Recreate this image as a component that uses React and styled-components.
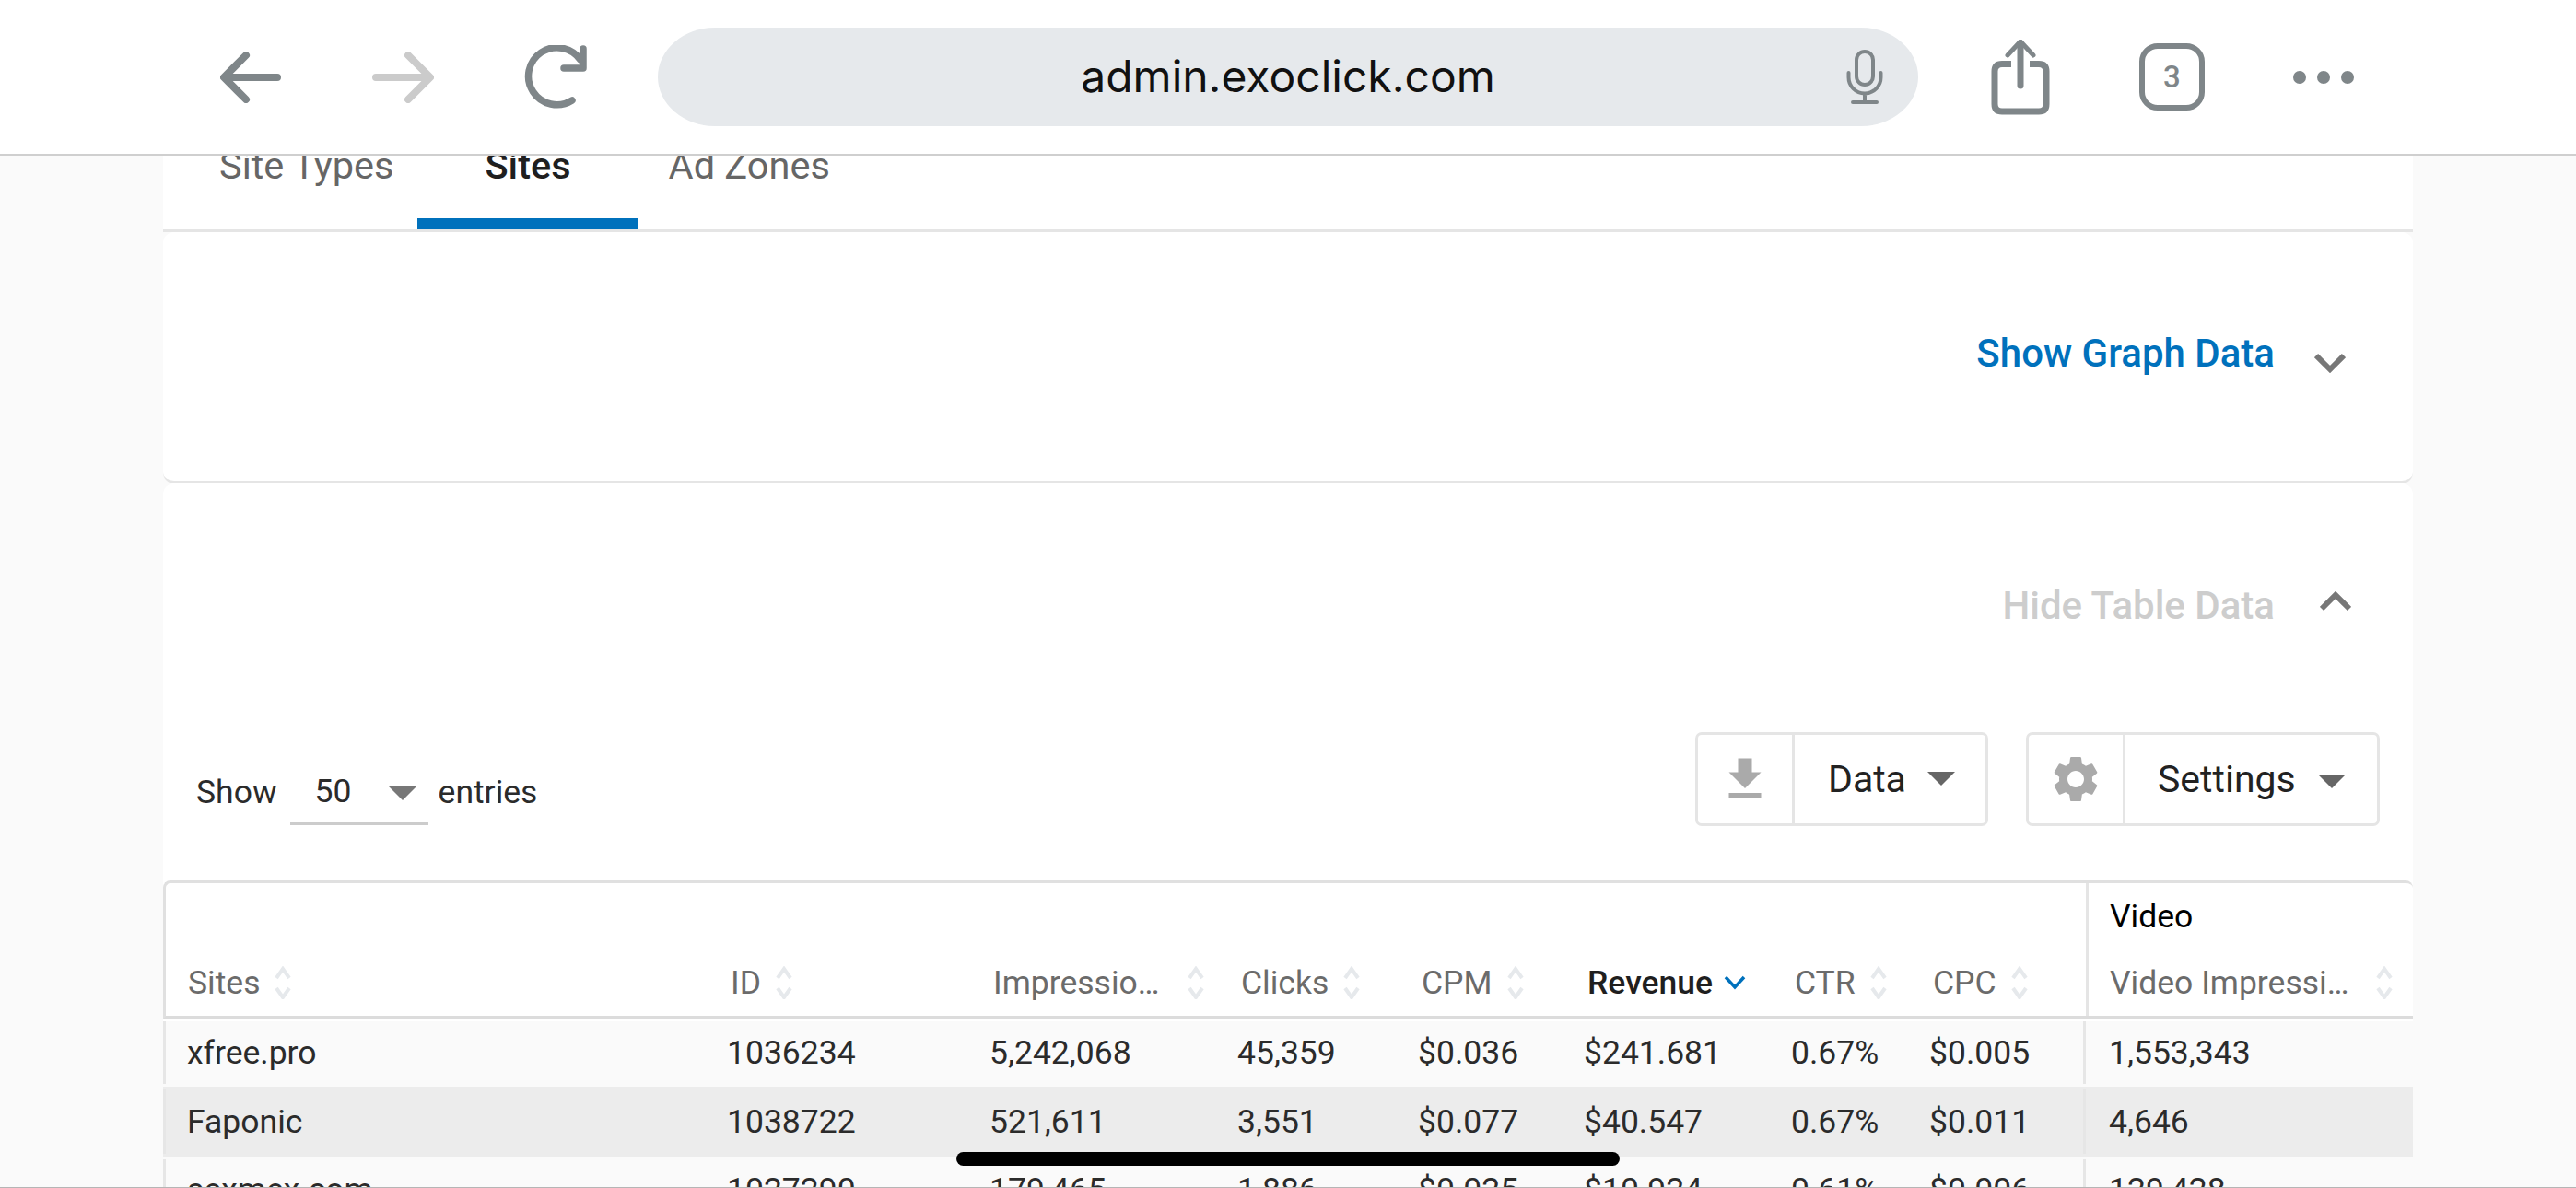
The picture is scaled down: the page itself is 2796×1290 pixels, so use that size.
import React from 'react'
import styled, { createGlobalStyle } from 'styled-components'
import { MdSettings, MdFileDownload } from 'react-icons/md'

const GlobalStyle = createGlobalStyle`
  html, body { margin: 0; padding: 0; height: 100%; overflow: hidden; background: #fafafa; }
  * { box-sizing: border-box; }
  body { font-family: Roboto, "Liberation Sans", sans-serif; color: #2b2b2b; }
`

const Screen = styled.div`
  position: relative;
  width: 2796px;
  height: 1290px;
  display: flex;
  flex-direction: column;
  overflow: hidden;
`

/* browser chrome */
const Toolbar = styled.header`
  flex: none;
  height: 169px;
  padding-left: 239px;
  display: flex;
  align-items: center;
  background: #fff;
  border-bottom: 2px solid #cfcfcf;
  color: #7f8689;
`
const NavIcon = styled.svg`
  flex: none;
  margin-left: ${p => p.$gap || 0}px;
  fill: none;
  stroke: ${p => p.$dim ? '#cbcbcb' : '#7f8689'};
  stroke-linecap: round;
  stroke-linejoin: round;
`
const AddressBar = styled.div`
  flex: none;
  width: 1368px;
  height: 107px;
  margin-left: 77px;
  display: grid;
  grid-template-columns: 1fr auto 1fr;
  align-items: center;
  background: #e6e9ec;
  border-radius: 62px / 53.5px;
`
const Url = styled.span`
  grid-column: 2;
  margin-top: -2px;
  font-family: Inter, Roboto, sans-serif;
  font-size: 48px;
  color: #111;
`
const Mic = styled.svg`
  grid-column: 3;
  justify-self: end;
  margin-right: 38px;
  fill: none;
  stroke: #7f8689;
  stroke-linecap: round;
`
const TabCount = styled.div`
  flex: none;
  width: 71px;
  height: 73px;
  margin-left: 97px;
  display: flex;
  align-items: center;
  justify-content: center;
  border: 6px solid #7f8689;
  border-radius: 20px;
  font-size: 33px;
  font-weight: 500;
  color: #7f8689;
`
const Dots = styled.div`
  flex: none;
  margin-left: 96px;
  display: flex;
  gap: 12px;
`
const Dot = styled.span`
  width: 14px;
  height: 14px;
  border-radius: 50%;
  background: #7f8689;
`

/* page */
const Page = styled.main`
  flex: 1;
  min-height: 0;
  padding: 0 177px;
  overflow: hidden;
  border-bottom: 1px solid #b5b5b5;
`
const TabBar = styled.nav`
  height: 83px;
  padding-left: 61px;
  display: flex;
  background: #fff;
  border-bottom: 3px solid #e5e5e5;
`
const Tab = styled.div`
  height: 91px;
  margin-top: -11px;
  padding-top: 1px;
  padding-left: ${p => p.$left}px;
  padding-right: ${p => p.$right}px;
  font-size: 41.5px;
  line-height: 42px;
  font-weight: ${p => p.$active ? 500 : 400};
  color: ${p => p.$active ? '#1f1f1f' : '#666'};
  border-bottom: ${p => p.$active ? '12px solid #0071bc' : '0'};
`
const Card = styled.section`
  background: #fff;
  border-radius: 12px;
  border-bottom: ${p => p.$last ? '0' : '3px solid #e5e5e5'};
`
const Toggle = styled.div`
  height: ${p => p.$height}px;
  padding-right: ${p => p.$right}px;
  display: flex;
  align-items: center;
  justify-content: flex-end;
`
const ToggleText = styled.span`
  margin-bottom: ${p => p.$shift}px;
  font-size: 42px;
  font-weight: 500;
  color: ${p => p.$muted ? '#cdcdcd' : '#0071bc'};
`
const Chevron = styled.svg`
  margin-left: ${p => p.$gap}px;
  margin-top: ${p => p.$shift}px;
  fill: none;
  stroke: #777;
  stroke-width: 6;
`
const Controls = styled.div`
  height: 102px;
  margin-top: 5px;
  padding: 0 36px 0 36px;
  display: flex;
  align-items: center;
`
const Length = styled.div`
  flex: 1;
  margin-top: 28px;
  display: flex;
  align-items: center;
  font-size: 35.5px;
  color: #2b2b2b;
`
const Select = styled.div`
  width: 150px;
  height: 72px;
  margin: 0 11px 0 14px;
  padding-left: 27px;
  padding-right: 13px;
  display: flex;
  align-items: center;
  justify-content: space-between;
  border-bottom: 3px solid #ccc;
`
const Caret = styled.span`
  width: 0;
  height: 0;
  border-left: ${p => p.$size}px solid transparent;
  border-right: ${p => p.$size}px solid transparent;
  border-top: ${p => p.$size}px solid ${p => p.$color || '#666'};
  margin-top: ${p => p.$shift || 0}px;
`
const ButtonGroup = styled.div`
  height: 102px;
  width: ${p => p.$width}px;
  margin-left: ${p => p.$gap || 0}px;
  display: flex;
  border: 3px solid #e5e5e5;
  border-radius: 7px;
`
const IconCell = styled.div`
  width: ${p => p.$width}px;
  display: flex;
  align-items: center;
  justify-content: center;
  border-right: 3px solid #e5e5e5;
  color: #aaa;
`
const ButtonLabel = styled.div`
  flex: 1;
  padding: 0 ${p => p.$right}px 0 ${p => p.$left}px;
  display: flex;
  align-items: center;
  justify-content: space-between;
  font-size: 41px;
  color: #222;
`

/* table */
const columns = '612px 285px 269px 196px 180px 225px 150px 167px 357px'
const rowHeights = [71, 76, 72]

const Table = styled.div`
  margin-top: 59px;
`
const Head = styled.div`
  display: grid;
  grid-template-columns: ${columns};
  grid-auto-rows: 72px;
  border-top: 3px solid #e0e0e0;
  border-left: 3px solid #e0e0e0;
  border-bottom: 3px solid #dcdcdc;
  border-top-right-radius: 8px;
  border-top-left-radius: 8px;
  margin-bottom: 3px;
`
const GroupSpacer = styled.div`
  grid-column: 1 / span 8;
`
const GroupCell = styled.div`
  padding-left: 23px;
  display: flex;
  align-items: center;
  border-left: 3px solid #e5e5e5;
  font-size: 35.5px;
  color: #000;
`
const HeadCell = styled.div`
  min-width: 0;
  padding-left: ${p => p.$first ? 24 : p.$split ? 23 : 1}px;
  padding-right: ${p => p.$right || 0}px;
  display: flex;
  align-items: center;
  border-left: ${p => p.$split ? '3px solid #e5e5e5' : '0'};
  font-size: 35.5px;
  font-weight: ${p => p.$sorted ? 500 : 400};
  color: ${p => p.$sorted ? '#1f1f1f' : '#6b6b6b'};
`
const Label = styled.span`
  min-width: 0;
  overflow: hidden;
  white-space: nowrap;
  text-overflow: ellipsis;
`
const SortIcon = styled.svg`
  flex: none;
  margin-left: ${p => p.$gap}px;
  fill: none;
  stroke: ${p => p.$active ? '#0071bc' : '#e6e9ec'};
  stroke-width: ${p => p.$active ? 3.5 : 4};
`
const Row = styled.div`
  display: grid;
  grid-template-columns: ${columns};
  height: ${p => p.$height}px;
  padding: ${p => p.$top}px 0 3px;
  background: ${p => p.$striped ? '#ececec' : '#fafafa'};
`
const Cell = styled.div`
  padding-left: ${p => p.$first ? 23 : p.$split ? 25 : 0}px;
  display: flex;
  align-items: center;
  border-left: ${p => (p.$first || p.$split) ? '3px solid #e6e6e6' : '0'};
  font-size: 35.5px;
  color: #2b2b2b;
  white-space: nowrap;
`
const HomeBar = styled.div`
  position: absolute;
  left: 1038px;
  bottom: 24px;
  width: 720px;
  height: 15px;
  border-radius: 8px;
  background: #000;
`

const Sort = ({ gap = 16 }) => (
  <SortIcon $gap={gap} width="18" height="36" viewBox="0 0 18 36">
    <path d="M2 13L9 3L16 13M2 24L9 34L16 24" />
  </SortIcon>
)

const headers = [
  { label: 'Sites', first: true },
  { label: 'ID' },
  { label: 'Impressions', right: 39, gap: 20 },
  { label: 'Clicks' },
  { label: 'CPM' },
  { label: 'Revenue', sorted: true },
  { label: 'CTR' },
  { label: 'CPC' },
  { label: 'Video Impressions', split: true, right: 24 },
]

const rows = [
  ['xfree.pro', '1036234', '5,242,068', '45,359', '$0.036', '$241.681', '0.67%', '$0.005', '1,553,343'],
  ['Faponic', '1038722', '521,611', '3,551', '$0.077', '$40.547', '0.67%', '$0.011', '4,646'],
  ['sexmex.com', '1027290', '179,465', '1,886', '$0.025', '$10.924', '0.61%', '$0.006', '129,428'],
]

const App = () => (
  <Screen>
    <GlobalStyle />
    <Toolbar>
      <NavIcon width="66" height="56" viewBox="0 0 66 56" strokeWidth="8">
        <path d="M62 28H5M28 4L4 28L28 52" />
      </NavIcon>
      <NavIcon $dim $gap={99} width="67" height="56" viewBox="0 0 67 56" strokeWidth="8">
        <path d="M4 28H62M39 4L63 28L39 52" />
      </NavIcon>
      <NavIcon $gap={97} width="69" height="70" viewBox="0 0 69 70" strokeWidth="7.5">
        <path d="M53 60A31 31 0 1 1 62 16" />
        <path d="M65 4V25H44" />
      </NavIcon>
      <AddressBar>
        <Url>admin.exoclick.com</Url>
        <Mic width="40" height="60" viewBox="0 0 40 60" strokeWidth="4">
          <rect x="11" y="2" width="18" height="36" rx="9" />
          <path d="M2.5 25V30A17.5 17.5 0 0 0 37.5 30V25M20 48V56M7 57H33" />
        </Mic>
      </AddressBar>
      <NavIcon $gap={79} width="64" height="82" viewBox="0 0 64 82" strokeWidth="7">
        <path d="M22 26.500H12Q4 26.500 4 34.500V70Q4 78 12 78H52Q60 78 60 70V34.500Q60 26.500 52 26.500H42" strokeLinecap="butt" />
        <path d="M32 4V50" />
        <path d="M18 17L32 2L46 17" strokeWidth="5" />
      </NavIcon>
      <TabCount>3</TabCount>
      <Dots>
        <Dot />
        <Dot />
        <Dot />
      </Dots>
    </Toolbar>

    <Page>
      <TabBar>
        <Tab $left={0} $right={26}>Site Types</Tab>
        <Tab $active $left={73} $right={73}>Sites</Tab>
        <Tab $left={33} $right={0}>Ad Zones</Tab>
      </TabBar>

      <Card>
        <Toggle $height={270} $right={73}>
          <ToggleText $shift={8}>Show Graph Data</ToggleText>
          <Chevron $gap={43} $shift={14} width="34" height="22" viewBox="0 0 34 22">
            <path d="M2 3L17 18L32 3" />
          </Chevron>
        </Toggle>
      </Card>

      <Card $last>
        <Toggle $height={265} $right={67}>
          <ToggleText $muted $shift={0}>Hide Table Data</ToggleText>
          <Chevron $gap={49} $shift={-10} width="34" height="22" viewBox="0 0 34 22">
            <path d="M2 19L17 4L32 19" />
          </Chevron>
        </Toggle>

        <Controls>
          <Length>
            Show
            <Select>
              50
              <Caret $size={15} $color="#777" $shift={6} />
            </Select>
            entries
          </Length>
          <ButtonGroup $width={318}>
            <IconCell $width={105}>
              <MdFileDownload size={60} />
            </IconCell>
            <ButtonLabel $left={36} $right={33}>
              Data
              <Caret $size={15} $shift={-2} />
            </ButtonLabel>
          </ButtonGroup>
          <ButtonGroup $width={384} $gap={41}>
            <IconCell $width={105}>
              <MdSettings size={60} />
            </IconCell>
            <ButtonLabel $left={35} $right={34}>
              Settings
              <Caret $size={15} $shift={4} />
            </ButtonLabel>
          </ButtonGroup>
        </Controls>

        <Table>
          <Head>
            <GroupSpacer />
            <GroupCell>Video</GroupCell>
            {headers.map(h => (
              <HeadCell key={h.label} $first={h.first} $split={h.split} $right={h.right} $sorted={h.sorted}>
                <Label>{h.label}</Label>
                {h.sorted ? (
                  <SortIcon $active $gap={12} width="24" height="16" viewBox="0 0 24 16">
                    <path d="M2 2L12 13L22 2" />
                  </SortIcon>
                ) : (
                  <Sort gap={h.gap} />
                )}
              </HeadCell>
            ))}
          </Head>
          {rows.map((row, i) => (
            <Row key={row[0]} $striped={i % 2 === 1} $height={rowHeights[i]} $top={i === 0 ? 0 : 3}>
              {row.map((value, j) => (
                <Cell key={j} $first={j === 0} $split={j === 8}>{value}</Cell>
              ))}
            </Row>
          ))}
        </Table>
      </Card>
    </Page>

    <HomeBar />
  </Screen>
)

export default App
